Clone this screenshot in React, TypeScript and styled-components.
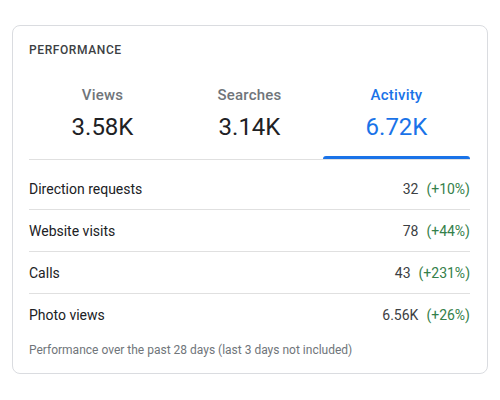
import { FC } from 'react'
import styled, { createGlobalStyle } from 'styled-components'

const GlobalStyle = createGlobalStyle`
  html, body {
    margin: 0;
    background: #fff;
    font-family: Roboto, 'Liberation Sans', Arial, sans-serif;
  }
`

interface Tab {
  label: string
  value: string
}

interface Stat {
  label: string
  value: string
  change: string
}

const tabs: Tab[] = [
  { label: 'Views', value: '3.58K' },
  { label: 'Searches', value: '3.14K' },
  { label: 'Activity', value: '6.72K' }
]

const stats: Stat[] = [
  { label: 'Direction requests', value: '32', change: '(+10%)' },
  { label: 'Website visits', value: '78', change: '(+44%)' },
  { label: 'Calls', value: '43', change: '(+231%)' },
  { label: 'Photo views', value: '6.56K', change: '(+26%)' }
]

const App: FC = () => {
  const activeTab = 2
  return (
    <Page>
      <GlobalStyle />
      <Card>
        <Title>Performance</Title>
        <TabRow>
          {tabs.map((tab, i) => (
            <TabItem key={tab.label} $active={i === activeTab}>
              <TabLabel>{tab.label}</TabLabel>
              <TabValue>{tab.value}</TabValue>
            </TabItem>
          ))}
        </TabRow>
        <StatList>
          {stats.map((s) => (
            <StatRow key={s.label}>
              <StatLabel>{s.label}</StatLabel>
              <StatValue>
                {s.value}
                <Change>{s.change}</Change>
              </StatValue>
            </StatRow>
          ))}
        </StatList>
        <Footer>Performance over the past 28 days (last 3 days not included)</Footer>
      </Card>
    </Page>
  )
}

const Page = styled.div`
  padding: 25px 12px 0 12px;
`

const Card = styled.div`
  width: 476px;
  box-sizing: border-box;
  border: 1px solid #dadce0;
  border-radius: 8px;
  padding: 16px 17px 15px 16px;
`

const Title = styled.div`
  font-size: 12px;
  line-height: 16px;
  font-weight: 500;
  letter-spacing: 0.6px;
  text-transform: uppercase;
  color: #3c4043;
`

const TabRow = styled.div`
  display: grid;
  grid-template-columns: repeat(3, 1fr);
  margin-top: 27px;
  border-bottom: 1px solid #e0e0e0;
`

const TabItem = styled.div<{ $active: boolean }>`
  position: relative;
  display: flex;
  flex-direction: column;
  align-items: center;
  gap: 6px;
  padding-bottom: 16px;
  color: ${(p) => (p.$active ? '#1a73e8' : '#202124')};
  & > div:first-child {
    color: ${(p) => (p.$active ? '#1a73e8' : '#70757a')};
  }
  &::after {
    content: '';
    display: ${(p) => (p.$active ? 'block' : 'none')};
    position: absolute;
    left: 0;
    right: 0;
    bottom: 0;
    height: 3px;
    border-radius: 3px 3px 0 0;
    background: #1a73e8;
  }
`

const TabLabel = styled.div`
  font-size: 15px;
  line-height: 20px;
  font-weight: 500;
  letter-spacing: 0.2px;
`

const TabValue = styled.div`
  font-size: 24px;
  line-height: 32px;
`

const StatList = styled.div`
  padding-top: 8px;
`

const StatRow = styled.div`
  display: flex;
  align-items: center;
  justify-content: space-between;
  height: 41px;
  font-size: 14px;
  border-bottom: 1px solid #e0e0e0;
  &:last-child {
    border-bottom: none;
  }
`

const StatLabel = styled.span`
  color: #202124;
`

const StatValue = styled.span`
  color: #3c4043;
`

const Change = styled.span`
  margin-left: 8px;
  color: #34804a;
`

const Footer = styled.div`
  margin-top: 7px;
  font-size: 12px;
  line-height: 16px;
  color: #70757a;
`

export default App
